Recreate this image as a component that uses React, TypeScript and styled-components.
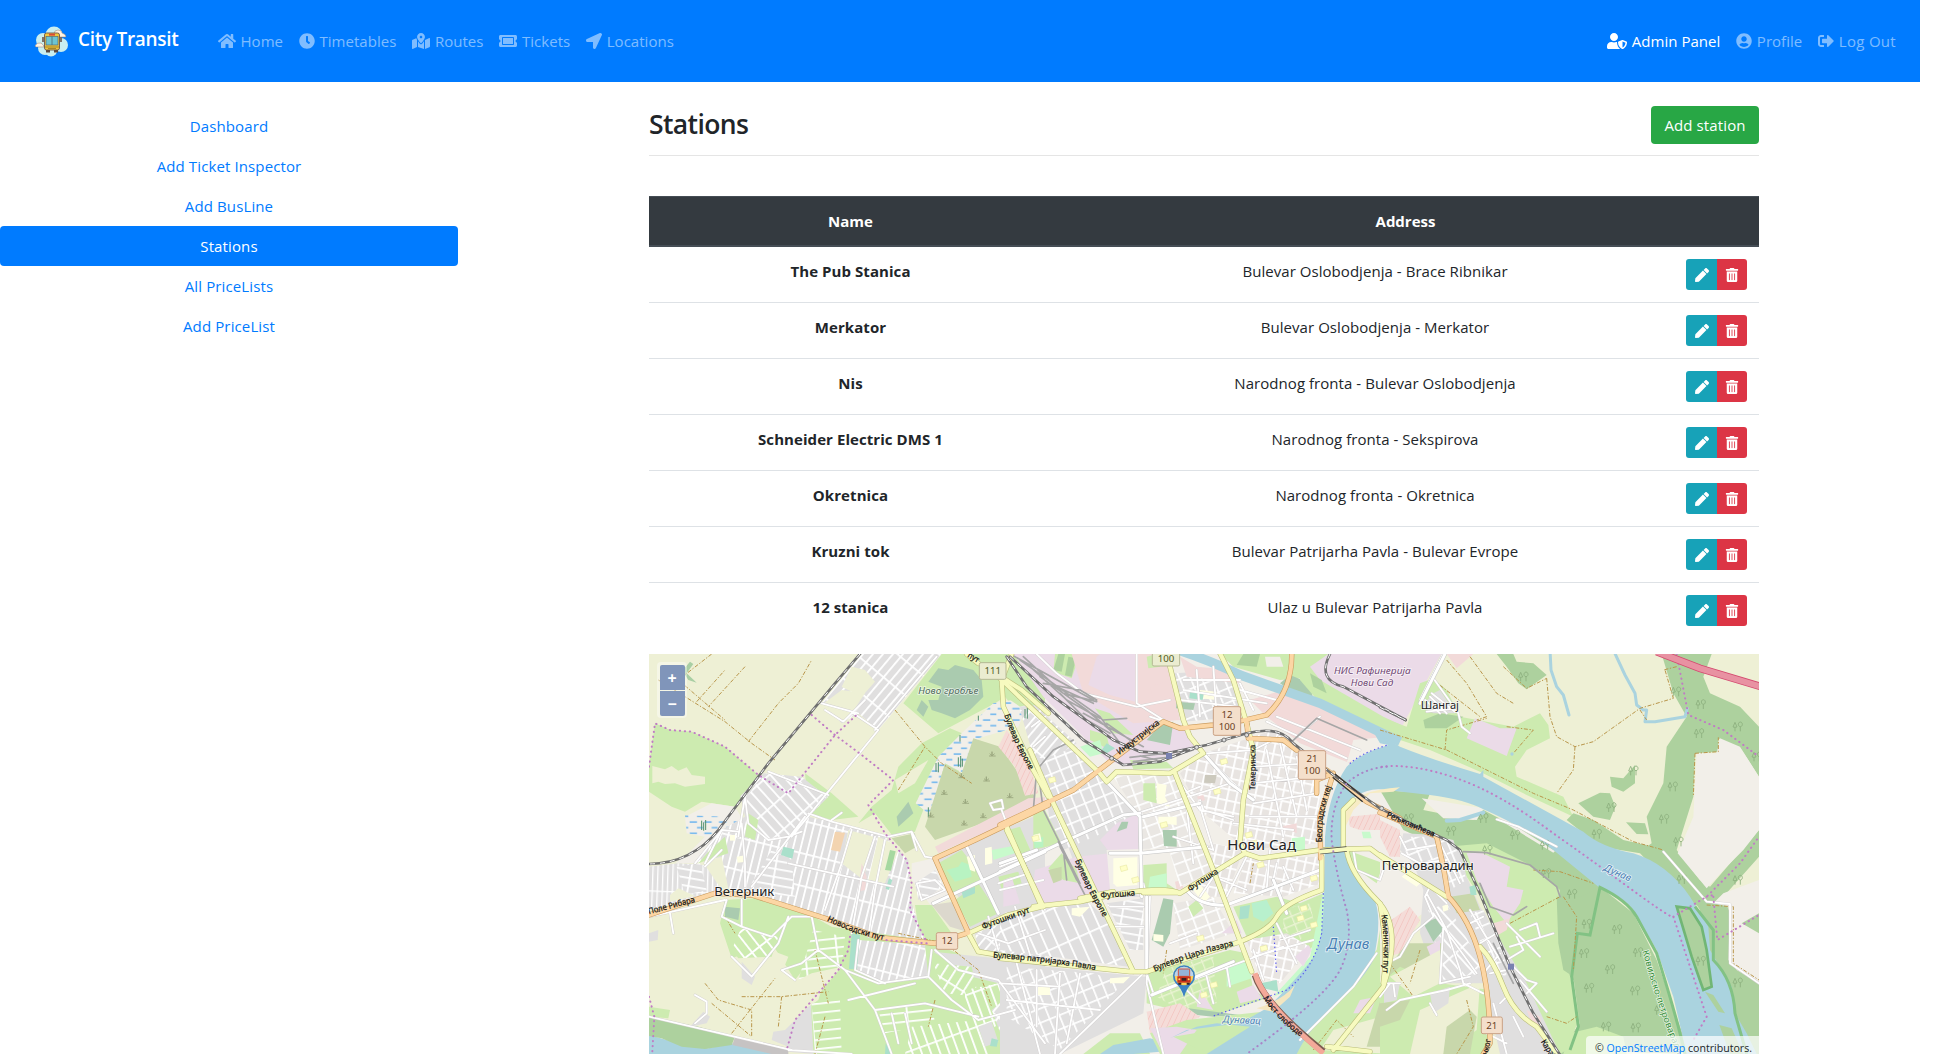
import React from "react";
import styled, { createGlobalStyle } from "styled-components";
import {
  FaHome, FaClock, FaMapMarkedAlt, FaTicketAlt, FaLocationArrow,
  FaUserShield, FaUserCircle, FaSignOutAlt, FaPen, FaTrashAlt,
} from "react-icons/fa";

const Global = createGlobalStyle`
  *, *::before, *::after { box-sizing: border-box; }
  html, body { margin: 0; background: #fff; height: 1054px; overflow: hidden; }
  body {
    font-family: "Open Sans", "Noto Sans", sans-serif;
    font-size: 15px; line-height: 24px; color: #212529;
  }
`;

const Page = styled.div`
  width: 1920px; height: 1054px; overflow: hidden;
  display: flex; flex-direction: column;
`;
const Navbar = styled.nav`
  height: 82px; background: #007bff; display: flex; align-items: center;
  padding: 0 16px 0 34px; flex: none;
`;
const Brand = styled.a`
  display: flex; align-items: center; gap: 8px; width: 176px;
  color: #fff; font-size: 19px; font-weight: 600; white-space: nowrap;
  letter-spacing: -0.3px;
  span { margin-top: -4px; }
`;
const NavGroup = styled.div<{ $end?: boolean }>`
  display: flex; margin-left: ${(p) => (p.$end ? "auto" : "0")};
`;
const NavLink = styled.a<{ $active?: boolean; $icon?: number; $track?: number }>`
  display: flex; align-items: center; gap: 4.5px; padding: 8px; white-space: nowrap;
  color: ${(p) => (p.$active ? "#fff" : "rgba(255,255,255,.5)")};
  letter-spacing: ${(p) => p.$track ?? 0.03}px;
  svg { flex: none; width: ${(p) => p.$icon ?? 16}px; height: 16px; }
`;
const Body = styled.div`
  display: flex; padding-top: 24px; flex: 1; min-height: 0;
`;
const Sidebar = styled.aside`
  width: 458px; display: flex; flex-direction: column; flex: none;
`;
const SideLink = styled.a<{ $active?: boolean }>`
  height: 40px; padding: 7.5px 16px; text-align: center; border-radius: 4px;
  letter-spacing: 0.12px;
  color: ${(p) => (p.$active ? "#fff" : "#007bff")};
  background: ${(p) => (p.$active ? "#007bff" : "transparent")};
`;
const Main = styled.main`
  width: 1110px; margin-left: 191px; display: flex; flex-direction: column; flex: none;
`;
const TitleBar = styled.header`
  height: 50px; display: flex; justify-content: space-between; align-items: flex-start;
  border-bottom: 1px solid #e5e5e5; margin-bottom: 40px; flex: none;
`;
const Title = styled.h3`
  margin: 0; font-size: 26.5px; font-weight: 600; line-height: 36px; letter-spacing: -0.6px;
`;
const AddButton = styled.button`
  width: 108px; height: 38px; border: 0; border-radius: 4px; background: #28a745;
  color: #fff; font: inherit; letter-spacing: 0.12px; white-space: nowrap; padding: 0;
`;
const Head = styled.div`
  display: grid; grid-template-columns: 403px 1fr; height: 51px; padding: 12px 0;
  background: #343a40; color: #fff; font-weight: 700; text-align: center;
  border-top: 1px solid #454d55; border-bottom: 2px solid #454d55; flex: none;
`;
const Row = styled.div`
  display: grid; grid-template-columns: 403px 646px 61px; height: 56px; padding-top: 12px;
  border-bottom: 1px solid #dee2e6; text-align: center; flex: none;
  &:last-child { border-bottom-color: transparent; }
`;
const Name = styled.div`font-weight: 700; letter-spacing: 0.07px;`;
const Address = styled.div`letter-spacing: 0.05px;`;
const Actions = styled.div`
  display: flex; justify-content: flex-end; padding-right: 12px;
`;
const IconButton = styled.button<{ $danger?: boolean }>`
  flex: none; height: 31px; width: ${(p) => (p.$danger ? 30 : 31)}px; border: 0; padding: 0;
  display: flex; align-items: center; justify-content: center; color: #fff;
  background: ${(p) => (p.$danger ? "#dc3545" : "#17a2b8")};
  border-radius: ${(p) => (p.$danger ? "0 3px 3px 0" : "3px 0 0 3px")};
  svg { width: 14px; height: 14px; }
`;
const Table = styled.section`height: 458px; flex: none;`;
const MapBox = styled.section`
  position: relative; height: 400px; overflow: hidden; flex: none;
  > svg { display: block; }
`;
const Zoom = styled.div`
  position: absolute; left: 8px; top: 8px; padding: 2.5px; border-radius: 4px;
  background: rgba(255,255,255,.4); display: flex; flex-direction: column; gap: 1px;
`;
const ZoomButton = styled.button<{ $last?: boolean }>`
  width: 25px; height: 25px; padding: 2px 0 0; border: 0; color: #fff;
  background: #8095ba; font: 700 16px/23px "Open Sans", sans-serif;
  border-radius: ${(p) => (p.$last ? "0 0 2px 2px" : "2px 2px 0 0")};
`;
const Attribution = styled.div`
  position: absolute; right: 0; bottom: 0; height: 18px; width: 173px; padding-right: 7px;
  background: rgba(255,255,255,.7); border-radius: 4px 0 0 0; text-align: right;
  font-size: 10.6px; line-height: 24px; white-space: nowrap; overflow: hidden;
  a { color: #007bff; }
`;

function Logo() {
  return (
    <svg width="36" height="31" viewBox="0 0 36 31">
      <g fill="#c9eef0">
        <circle cx="20" cy="9" r="8.5" /><circle cx="9" cy="14" r="7" />
        <circle cx="27" cy="19" r="7" /><circle cx="11" cy="22" r="7" />
        <circle cx="17" cy="24" r="6.5" />
      </g>
      <path d="M20 8q0-4 4-4 4 0 4 3 4 1 4 4h-9zM1 20q2-4 6-3 3 2 3 4H2z" fill="#fff3e3" stroke="#8d7c70" strokeWidth=".5" />
      <path d="M9 11v5M27 11v5" stroke="#6b5348" strokeWidth="1.6" />
      <rect x="10.5" y="7" width="15" height="17" rx="2" fill="#efc53d" stroke="#6b5348" strokeWidth=".9" />
      <rect x="15" y="7.6" width="6" height="2" fill="#d94a3b" />
      <rect x="12" y="10.5" width="12" height="8.5" fill="#6cc4d2" stroke="#5b6b70" strokeWidth=".7" />
      <path d="M18 10.5v8.5" stroke="#4c6a72" strokeWidth=".8" />
      <path d="M11 21h14M14 22.5h8" stroke="#8a6a1f" strokeWidth=".7" />
      <path d="M12 24h4v2.5h-4zM20 24h4v2.5h-4z" fill="#5a4a44" />
    </svg>
  );
}

/* ---------- map drawing: three sheets, three units to a pixel ---------- */

const C = {
  farm: "#eef0d5", grass: "#cdebb0", forest: "#add19e", water: "#aad3df", town: "#e0dfdf",
  ind: "#ebdbe8", land: "#f2efe9", pink: "#f2dad9", scrub: "#c8d7ab", school: "#ffffe5",
  park: "#c8facc", cem: "#aacbaf", pitch: "#aae0cb",
};
type Area = [string, string];
type Sheet = {
  x: number; areas: Area[]; streets: string; avenues: string; yellow: string; orange: string;
  rail: string; siding: string; tracks: string; border: string;
};

const west: Sheet = {
  x: -12,
  areas: [
    [C.farm, "0,0 1250,0 1250,1212 0,1212"],
    [C.grass, "30,220 75,240 140,245 240,290 340,375 350,395 290,440 270,470 170,455 120,485 80,470 12,425 12,350"],
    [C.farm, "22,348 60,358 80,348 100,362 125,352 140,375 180,380 180,402 120,410 90,400 60,402 40,395 22,400"],
    [C.land, "120,500 200,460 270,470 300,520 240,540 150,640 90,640 130,610 180,560 125,550"],
    ["url(#wet)", "120,495 240,500 290,520 240,535 190,560 125,550"],
    ["#a9cfa4", "112,62 135,35 145,42 125,70 155,98 130,90"],
    [C.water, "12,1155 100,1180 190,1195 260,1180 400,1212 12,1212"],
    [C.grass, "12,1070 75,1080 70,1105 12,1100"],
    [C.forest, "12,1100 160,1130 270,1160 260,1185 180,1197 110,1190 50,1165 12,1158"],
    ["#c6c3c3", "270,1160 430,1195 430,1212 380,1212 262,1185"],
    [C.town, "385,1145 420,1140 500,1060 505,1212 430,1205 430,1190 380,1170"],
    ["url(#sNE)", "650,12 890,12 700,240 640,190 590,220 530,160"],
    [C.farm, "590,120 660,130 600,220 530,165"],
    [C.farm, "620,50 660,60 690,95 650,140 590,110"],
    [C.grass, "890,12 1095,12 1200,50 1200,190 1110,180 1080,140 1050,160 880,250 775,160"],
    [C.pink, "1100,12 1230,12 1230,110"],
    [C.cem, "880,55 910,60 930,45 985,60 1010,90 1015,140 975,180 930,205 890,190 860,180 850,150 880,150 890,110 850,95"],
    [C.cem, "815,180 830,150 850,170 835,200"],
    [C.grass, "915,235 980,262 940,370 900,360 850,440 810,545 745,560 690,490 640,520 680,470 740,420 760,350 830,280"],
    [C.land, "1045,160 1160,140 1120,230 1000,265 965,375 900,340 855,495 812,460 880,320 950,250"],
    ["url(#wet)", "1045,160 1160,140 1120,230 1000,265 965,375 900,340 855,495 812,460 880,320 950,250"],
    [C.farm, "750,390 850,330 810,400 760,430"],
    [C.scrub, "985,265 1065,290 1170,440 1110,485 870,570 840,530 900,342 950,370"],
    [C.cem, "790,455 805,490 760,530 755,500"],
    [C.scrub, "740,565 810,550 815,590 780,610"],
    [C.pink, "870,590 1150,445 1215,440 1215,480 1140,505 990,560 880,610"],
    ["url(#mil)", "1085,240 1150,330 1180,430 1140,437 1110,350 1060,290"],
    [C.grass, "480,370 560,430 640,500 560,510 490,490"],
    ["url(#sV)", "360,370 450,380 550,440 490,500 560,515 720,560 790,630 800,760 840,870 700,870 540,810 470,780 320,735 250,715 230,620 150,640 230,540 300,500 290,450"],
    ["url(#sNW)", "355,370 470,380 545,440 440,560 370,570 310,520 300,450"],
    ["url(#sWide)", "320,700 380,600 440,630 450,740 400,735"],
    [C.farm, "610,540 685,560 655,690 590,640"], [C.farm, "700,560 765,590 720,700 670,690"],
    [C.grass, "195,600 240,560 250,610 160,640"], [C.grass, "310,490 340,510 330,570 300,560"],
    [C.pitch, "415,590 448,598 442,626 408,615"], ["#f3d4b0", "570,545 600,548 585,605 558,600"],
    ["#a6d8a0", "735,600 752,604 738,662 720,660"], [C.pitch, "732,685 742,690 732,720 722,716"],
    [C.pink, "650,640 665,680 660,720 640,725"], [C.school, "255,555 270,555 270,572 255,572"],
    [C.school, "275,620 300,616 298,636 278,638"],
    ["url(#sWW)", "12,650 100,640 180,645 230,720 160,740 12,780"],
    ["url(#sWide)", "95,650 165,640 185,720 120,735"],
    [C.farm, "75,735 100,715 150,738 75,755"],
    [C.grass, "240,750 330,745 470,780 560,830 840,870 1060,960 1200,1130 1250,1212 505,1212 498,1060 590,950 520,900 450,990 380,880 260,925 225,820"],
    [C.farm, "390,905 430,920 410,970 450,1000 550,950 520,1050 490,1070 330,960"],
    [C.town, "290,935 330,980 320,1005 290,985"], [C.town, "135,1130 175,1085 195,1100 185,1120"],
    [C.town, "12,850 40,840 38,870 12,875"],
    ["url(#gNW)", "320,840 400,860 380,920 280,925 260,900 290,830"],
    ["url(#sV)", "640,870 840,885 850,985 720,1000 635,960"],
    ["url(#gH)", "505,840 600,860 590,950 500,970 460,990"],
    [C.pitch, "620,850 645,855 636,958 612,957"],
    [C.town, "865,905 1200,940 1250,1000 1250,1212 1120,1212 1040,1100 1060,1000 980,980"],
    ["url(#gNE)", "865,940 980,950 1000,1040 900,1030"],
    ["url(#gV)", "960,1020 1060,1000 1090,1110 1010,1150 960,1100"],
    ["url(#sNE)", "1040,1080 1100,1030 1200,1080 1180,1212 1090,1212"],
    ["url(#gH)", "700,1080 860,1060 870,1120 720,1150"],
    ["url(#gH)", "500,1060 585,1050 590,1212 510,1212"],
    ["url(#gV)", "800,1130 1000,1110 1040,1212 780,1212"],
    [C.town, "1000,1130 1040,1115 1060,1175 1020,1190"],
    [C.cem, "240,770 285,775 280,810 240,800"],
    [C.pitch, "722,1180 740,1212 720,1212"], [C.pitch, "1040,1165 1060,1170 1055,1190 1035,1188"],
    [C.town, "870,625 1200,485 1250,480 1250,740 975,845 940,740"],
    [C.land, "800,640 865,625 920,745 860,770 800,690"],
    ["url(#sWide)", "810,700 870,660 895,710 850,740 820,750"],
    ["#dcd8cd", "860,765 925,755 965,845 915,830"],
    [C.grass, "810,765 860,765 920,850 850,880 820,830"],
    [C.grass, "880,640 950,600 1020,690 920,740"], [C.grass, "930,750 1000,700 1060,790 975,830"],
    ["#b8f3c2", "905,660 940,650 950,635 975,645 980,680 930,695"],
    [C.park, "1040,600 1120,585 1125,605 1045,630"], [C.school, "1020,595 1040,590 1042,640 1020,645"],
    [C.school, "965,620 990,615 990,665 975,660"], [C.pitch, "950,725 990,710 990,730 955,745"],
    [C.school, "1165,560 1195,545 1195,570 1165,575"], [C.grass, "1060,680 1120,665 1130,700 1070,720"],
    ["url(#sNE)", "990,850 1180,780 1210,930 1000,900"],
  ],
  streets:
    "M530,160 640,190 M540,180 595,215 660,150 M690,240 875,20 M440,560 700,240 M700,240 625,190 M320,710 480,500 M490,490 560,515 730,560 800,545 840,620 M430,640 540,665 745,710 M370,365 550,435 M560,510 590,488 M620,540 590,640 540,780 M690,560 650,680 620,850 M720,570 690,720 670,860 M300,440 310,520 370,570 430,560 470,545 M230,540 180,640 M150,640 230,540 280,545 M290,440 350,380 M245,750 230,800 290,830 290,750 M290,830 380,860 440,800 500,800 520,900 600,960 M12,800 240,750 M75,790 85,850 M600,960 690,1080 740,1212 M600,960 700,1000 850,980 920,1050 1000,1110 1110,1080 M690,1080 840,1060 1000,1100 M850,980 860,900 M520,900 470,940 410,960 450,990 M260,920 320,980 400,880 430,800 M150,1120 185,1090 185,1055 150,1035 M12,1100 440,1200 M430,1200 620,1212 M870,900 940,960 1060,990 1200,1180 M640,870 630,960 720,1000 M815,700 830,750 900,720 870,690 815,700 M840,620 870,625 M800,550 815,600 M1000,850 1090,880 1200,840 M1030,800 1060,900 M1110,770 1160,930 M1035,460 1070,450 1075,475 1045,480 1035,460 M1070,480 1085,520 M1140,640 1200,780 M1060,700 1150,670 M1160,230 1200,200 M1165,290 1200,260 M610,1050 810,1000 M740,1090 760,1180 M780,1090 800,1180 M230,600 180,650 M280,560 300,440 M290,520 300,640 300,710",
  avenues: "M865,760 1200,605 M965,590 1060,790",
  yellow: "M965,12 1000,40 M1100,12 1070,90 1075,170 1165,360 1210,440 M1075,85 1130,120 1210,190 M1085,530 1190,770 M970,850 1090,795 1190,770 M970,850 1000,905 1060,915 1210,940",
  orange: "M12,795 210,730 320,735 540,805 700,862 870,880 970,848 870,625 990,570 1210,465",
  rail: "M645,12 570,100 370,340 220,540 Q140,640 12,642",
  siding: "",
  tracks: "M200,12 100,90 M300,50 190,170 M40,90 240,215 320,280 390,330 M100,90 240,210 M310,275 400,160 460,100 500,30 M155,155 240,60 M750,180 840,290 890,340 980,400 M760,420 840,290 M290,1040 410,1040 550,1025 M180,1000 220,1050 320,1080 320,1160 M410,1040 400,1130 M260,1150 390,985 M200,1060 320,1160 M510,900 550,1060 M510,1212 540,1100 M760,850 900,880 1000,960 1040,1070 M870,1050 850,1130 M240,800 270,850",
  border: "M12,350 30,220 75,240 140,245 240,290 340,375 430,430 570,255 640,190 M500,195 570,255 650,315 745,390 670,465 720,550 785,630 800,700 795,780 845,875 M845,880 720,870 M615,860 610,900 580,960 450,1110 425,1200 M12,1040 28,1100 22,1205",
};

const centre: Sheet = {
  x: 1053,
  areas: [
    [C.land, "135,0 1200,0 1200,1212 135,1212"],
    [C.grass, "0,90 100,160 60,170 0,130"], [C.town, "60,170 110,165 320,400 430,500 425,740 260,740 160,470 110,350"],
    ["url(#sNE)", "60,180 120,180 230,280 150,330 100,320"],
    ["url(#sBlk)", "120,330 230,290 330,400 400,490 160,580 140,450"],
    ["url(#sBlk)", "140,450 200,480 390,490 400,510 190,600"],
    [C.ind, "40,12 240,12 250,130 410,190 560,240 600,290 380,350 320,330 130,140"],
    [C.grass, "285,175 330,190 400,255 340,250"], [C.grass, "270,240 320,255 330,300 270,270"],
    [C.grass, "390,330 500,335 520,355 400,358"],
    [C.grass, "165,12 240,12 215,85 160,65"],
    [C.forest, "175,12 195,12 185,65 160,60"], [C.forest, "205,20 228,25 215,80 195,76"],
    [C.pink, "215,12 500,12 540,210 400,220 250,130"], [C.ind, "290,20 300,12 405,12 405,155 330,135 265,105"],
    [C.pink, "450,110 510,90 520,140 460,150"], [C.grass, "440,20 470,12 480,50 445,55"],
    [C.cem, "475,230 520,215 510,285 440,270"],
    ["url(#sBlk)", "520,70 700,60 720,200 550,215"], [C.school, "600,120 650,125 650,150 600,145"],
    [C.pitch, "570,125 612,128 608,150 568,145"], [C.cem, "530,155 585,160 580,180 528,175"],
    [C.grass, "660,12 900,12 960,80 840,90 700,50"], [C.forest, "730,12 780,12 770,50 710,45"],
    [C.cem, "840,100 870,75 930,100 940,150 890,135"], [C.land, "795,20 840,20 850,50 800,50"],
    [C.pink, "540,20 590,50 700,60 720,100 560,80"],
    [C.pink, "750,150 850,120 1100,210 1150,270 1050,340 900,280 800,200"],
    [C.land, "1060,270 1160,260 1150,290 1040,340"],
    [C.grass, "890,12 1000,12 1260,260 1140,240 960,160 900,90"],
    [C.ind, "985,12 1330,12 1215,230 1150,200 960,90 930,50"],
    [C.forest, "930,70 965,90 980,130 940,110"],
    [C.park, "240,290 300,270 310,310 270,320"], [C.pitch, "320,280 345,295 320,310 305,300"],
    ["url(#sOld)", "610,310 820,240 900,300 960,430 950,580 740,600 600,480 540,370"],
    ["url(#sBlk2)", "340,380 520,370 620,590 640,650 430,680 420,500"],
    ["url(#sOld)", "560,620 640,580 730,600 680,740 600,740"],
    ["url(#sOld)", "740,625 960,620 965,700 850,740 700,730"],
    [C.school, "470,400 500,405 495,440 510,470 470,460"], [C.grass, "430,400 465,400 470,460 430,450"],
    [C.cem, "488,540 530,540 530,590 492,588"], [C.school, "475,500 530,500 530,525 475,520"],
    ["#ccc9bd", "615,375 650,375 645,400 612,398"], [C.pink, "610,435 590,440 600,455 615,450"],
    [C.park, "875,565 915,560 915,600 875,605"], [C.pink, "840,530 890,520 890,550 870,540"],
    [C.ind, "350,520 415,490 415,610 330,610 300,570"], [C.cem, "365,515 385,515 380,535 350,545"],
    [C.grass, "100,470 135,480 185,580 100,600"], ["#b8f3c2", "100,570 130,560 130,590 105,595"],
    [C.school, "100,555 120,550 125,575 100,575"],
    [C.ind, "105,660 230,620 330,610 330,740 130,765 100,700"],
    [C.grass, "145,655 185,610 230,660 240,700 190,690"], [C.scrub, "145,660 185,650 185,690 160,700"],
    [C.land, "320,600 640,590 600,720 430,740 330,720"],
    [C.school, "340,625 412,622 412,705 350,710 340,700"], [C.grass, "430,645 500,640 500,700 530,720 430,725"],
    [C.park, "450,680 500,670 500,720 445,715"], [C.pink, "525,695 545,690 550,715 530,720"],
    ["url(#sBlk2)", "510,610 600,590 640,660 540,710"],
    [C.ind, "10,690 35,680 60,760 10,770"],
    [C.grass, "25,540 60,530 95,610 60,620"],
    ["url(#sV2)", "0,790 130,775 260,755 330,810 385,950 0,900"],
    ["url(#sWide)", "320,760 430,745 430,900 390,900"],
    [C.school, "215,775 270,770 240,800 215,795"],
    [C.land, "440,745 670,760 720,860 460,920 440,900"], ["url(#sBlk2)", "520,760 640,740 700,850 540,900"],
    [C.cem, "490,745 520,750 510,850 490,890 455,870"], [C.school, "460,852 490,855 490,875 460,872"],
    [C.grass, "565,770 590,750 610,775 580,800"], [C.school, "590,690 630,740 610,760 580,720"],
    [C.ind, "665,850 710,810 725,850"],
    [C.grass, "700,770 830,740 900,760 970,730 970,840 930,900 860,880 740,860"],
    ["#b8f0cd", "755,760 800,750 820,790 790,815 760,800"], [C.pitch, "720,770 750,765 745,805 718,808"],
    ["url(#sPark)", "850,800 880,770 930,760 945,830 900,870 850,840"],
    ["url(#sOld)", "740,870 860,850 930,890 840,1000 780,980"],
    [C.park, "970,720 975,820 940,940 870,1020 820,1040 930,920"],
    [C.ind, "885,920 925,885 935,900 910,950"], [C.pitch, "780,1000 830,990 835,1025 790,1015"],
    [C.grass, "440,970 690,900 740,910 760,1020 800,1045 650,1095 570,1090 440,1060"],
    [C.park, "680,950 740,935 755,985 680,1010"], [C.ind, "710,1025 760,1005 785,1045 720,1060"],
    ["url(#sPark)", "500,950 640,920 650,1060 540,1080 470,1040"],
    [C.ind, "600,1020 640,1080 590,1070"], [C.cem, "565,1075 720,1095 640,1100 590,1095"],
    ["url(#mil)", "440,1085 540,1060 600,1100 560,1120 450,1150"],
    [C.town, "0,935 280,965 440,980 430,1090 180,1212 0,1212"],
    ["url(#sBlk)", "20,950 280,970 370,1000 180,1200 20,1100"],
    [C.school, "110,1005 150,1005 150,1035 110,1035"], [C.school, "330,985 390,980 370,1000 330,1000"],
    [C.grass, "250,1212 330,1150 420,1150 450,1212"], [C.water, "300,1212 340,1185 450,1165 520,1185 480,1205 400,1212"],
    [C.grass, "450,1150 560,1110 840,1080 700,1212 480,1212"], [C.ind, "450,1135 530,1130 590,1140 540,1212 490,1212"],
    [C.grass, "520,1160 700,1130 710,1160 600,1200"],
    [C.grass, "880,1180 1000,1040 1130,900 1150,780 1200,780 1200,1212 880,1212"],
    [C.farm, "960,1200 1000,1140 1180,1090 1180,1212"], [C.ind, "1080,1050 1130,1040 1110,1090 1060,1090"],
    [C.scrub, "1150,1020 1200,990 1200,1190 1100,1190"],
    ["url(#mil)", "1045,500 1200,485 1200,560 1160,540 1110,550 1050,530"],
    [C.land, "1045,540 1200,540 1200,800 1150,780 1130,700 1050,620"],
    [C.park, "1085,545 1110,545 1115,565 1090,565"], [C.grass, "1040,600 1150,640 1130,700 1060,650"],
    ["url(#mil)", "1180,800 1220,800 1220,880 1170,900"],
  ],
  streets:
    "M110,12 170,70 250,130 M430,970 180,1212 M410,0 410,160 490,210 M250,130 410,170 510,150 M0,720 130,690 M700,400 760,450 M520,370 600,480 700,500 M600,300 700,400 750,440 M410,490 690,400 M550,430 600,410 M600,450 610,480 700,510 M700,520 880,540 M760,460 950,430 M620,310 760,300 840,260 M800,300 850,560 M840,280 890,500 M890,320 920,480 M760,350 930,340 M755,400 950,380 M750,500 950,500 M810,600 800,720 M830,640 820,690 840,740 M680,740 740,620 M600,740 640,680 740,720 M450,200 540,230 M540,150 710,170 M590,60 600,200 M640,50 650,200 M550,90 720,90 M550,120 800,160 M720,120 830,150 M800,215 1040,325 M830,200 1080,300 M900,250 960,200 M760,180 720,100 M460,1030 440,970 M455,1035 850,890 M440,1000 470,1130 490,1212 M0,1000 180,1010 M50,940 120,1212 M180,970 165,1212 M240,970 200,1180 M110,960 110,1130 M20,1050 300,1080 M450,740 440,1000 M430,700 440,740 M520,560 640,600 M640,1060 620,980 M540,1000 600,1060 M690,1010 680,950 M880,720 850,650 M790,990 760,900 M930,840 840,870 M830,820 890,940 M760,920 940,870 M900,1170 1060,1010 1130,910 M1070,660 1140,690 1150,660 M1060,600 1070,660 M510,880 590,850 M330,770 430,770 M330,830 430,830 M0,650 100,610 M560,470 580,640 M600,470 640,600",
  avenues: "M0,665 180,580 370,495 420,490 M320,395 420,500 425,740 M0,640 110,600 M420,610 620,590 M440,970 440,740 M560,720 Q600,770 680,765 L960,660 M820,690 860,790 M455,1035 700,935 M330,610 420,610 M430,500 600,460 M610,310 690,400 760,450",
  yellow: "M510,50 550,210 570,260 610,310 510,370 350,365 320,395 300,370 0,85 M655,0 700,90 740,220 760,300 730,450 720,580 735,610 780,625 960,600 1110,595 1170,640 M525,370 640,660 755,965 M90,300 160,460 400,965 M240,745 340,725 M430,728 540,728 M100,770 240,755 Q480,700 540,730 L735,610 M0,925 390,965 440,965 720,875 Q810,840 830,800 T965,720 L965,620 M20,540 130,770 M1040,600 Q1050,670 1130,750 T1150,1010 L1000,1200 M1030,595 1030,480 1060,450 M980,1190 1110,1205",
  orange: "M0,525 220,420 350,320 490,215 540,235 640,225 735,210 800,195 Q880,120 875,0 M740,215 745,265 850,270 890,300 M980,360 1100,455 1200,505 M950,430 950,390 1000,370 960,500 962,625",
  rail: "M30,20 160,140 340,270 420,305 500,310 620,285 740,250 Q840,225 880,280 L1000,375 1140,475 M20,20 80,110 250,270 370,345 480,335 590,292 M990,12 Q950,90 1030,110 L1217,210",
  siding: "M30,12 280,150 M60,30 300,200 360,280 M120,80 260,180 330,240 M170,110 280,160 M250,190 430,290 M70,20 190,130 290,155 M90,50 200,150 300,205 M130,100 240,120 290,150 M180,130 260,210 330,250 M390,322 480,312 560,300 M400,335 500,322 580,300 M420,318 470,330 M100,480 110,360 160,300 220,270 M115,370 130,480 240,700 M180,590 260,745 M175,575 230,690 M870,280 950,205 1100,270 M190,600 200,690 M310,210 380,205 M320,220 390,270",
  tracks: "M940,1200 1010,1110 1060,1160 M500,900 490,970 M750,700 760,640",
  border: "",
};

const east: Sheet = {
  x: 2193,
  areas: [
    [C.farm, "190,0 1200,0 1200,1212 0,1212 0,440 60,240"],
    [C.land, "0,430 200,540 260,700 0,880"],
    [C.grass, "0,200 80,230 120,100 160,85 200,120 240,200 400,230 480,190 505,225 510,265 440,300 405,350 410,380 550,440 580,500 430,430 300,365 150,300 0,250"],
    [C.forest, "130,210 180,190 250,200 200,235 135,235"],
    [C.ind, "285,205 360,235 410,235 380,318 260,265"],
    [C.pink, "200,12 280,12 230,55"], [C.forest, "350,12 400,12 410,35 460,40 500,75 440,118 415,100 380,50"],
    [C.town, "160,130 180,120 225,190 160,190 125,170"],
    [C.forest, "845,12 995,12 970,80 990,130 1080,170 1137,230 1137,380 1085,300 1015,265 1015,305 945,310 940,440 890,600 960,690 990,710 1080,605 1137,540 1137,620 1030,740 1137,1000 1137,1212 980,1212 960,780 850,610 800,590 815,580 800,500 850,400 860,290 920,200 880,130"],
    [C.land, "950,310 1010,310 1020,265 1080,290 1137,380 1137,540 1090,600 1040,650 980,715 893,610 940,500"],
    [C.land, "1000,760 1030,730 1137,690 1137,1000 1070,960 1045,930 1050,770"],
    [C.forest, "1085,820 1137,790 1137,850"],
    [C.forest, "690,380 730,385 765,345 765,400 730,425 695,410"],
    [C.forest, "595,460 660,428 690,430 706,470 690,510 640,500"],
    [C.forest, "738,517 795,520 805,553 770,552"],
    [C.forest, "580,490 640,510 730,570 820,590 850,610 970,760 935,770 780,610 660,590 560,510"],
    [C.forest, "0,420 150,430 130,480 280,510 310,480 540,600 660,710 770,1040 700,1212 530,1212 600,1120 590,1000 550,960 540,750 400,640 200,600 70,540"],
    [C.grass, "200,590 320,580 440,640 540,720 540,860 600,1100 560,1200 540,1212 440,1060 400,960 300,740"],
    [C.forest, "530,740 600,740 660,710 760,790 830,930 900,1130 930,1212 560,1200 600,1130 580,980 550,960 535,880"],
    [C.grass, "570,1150 650,1130 730,1160 740,1212 550,1212"],
    [C.land, "125,445 310,475 290,510 190,505"],
    [C.land, "350,505 370,505 525,603 520,608"],
    [C.ind, "260,610 300,605 390,650 380,710 430,720 420,760 380,820 340,770 290,690"],
    [C.town, "70,550 170,555 240,600 260,680 300,770 440,1000 540,1212 360,1212 330,1080 320,1000 170,1000 120,850 130,720 100,640 60,600"],
    ["url(#sBlk)", "70,560 160,560 180,630 120,640 65,610"],
    ["url(#sNW)", "145,780 200,760 280,900 310,970 190,990 170,900"],
    ["url(#sBlk)", "270,790 310,780 370,900 380,980 330,960"],
    ["url(#sBlk)", "170,560 220,570 260,690 210,720"],
    ["url(#mil)", "0,510 60,540 60,620 30,620 0,560"],
    ["url(#mil)", "20,820 90,770 120,810 60,910 20,920"],
    [C.cem, "130,820 180,800 190,840 160,875"], [C.scrub, "210,740 280,730 300,780 230,790"],
    [C.scrub, "80,880 190,880 180,920 40,1000 20,960"], [C.ind, "140,890 180,870 180,915 150,915"],
    [C.grass, "0,1000 60,950 180,1000 330,1020 320,1212 0,1212"],
    [C.farm, "30,980 180,900 180,1000 100,1040"], [C.farm, "120,1080 300,1000 290,1140 190,1212 90,1212"],
    [C.town, "12,1000 60,1000 50,1050 12,1060"], [C.town, "150,1030 210,1010 205,1060 160,1090"],
    [C.scrub, "0,1060 90,1050 60,1110 0,1130"], [C.scrub, "200,1130 270,1080 290,1100 270,1212 190,1212"],
    [C.pink, "340,820 390,805 380,840 345,860"], [C.pink, "440,1080 480,1100 490,1150 455,1120"],
    [C.school, "65,680 90,660 130,690 110,710"], [C.pitch, "268,710 285,705 290,735 272,735"],
    [C.school, "187,768 203,763 205,780 190,785"],
  ],
  streets:
    "M195,0 120,150 M160,85 235,190 245,230 270,250 M135,150 180,190 M150,140 200,190 M155,130 225,185 M140,185 230,175 M65,610 120,640 200,630 M60,560 80,600 170,585 M170,560 240,700 M150,710 135,740 160,800 100,850 60,920 20,940 M150,710 200,760 M140,730 200,840 240,960 250,1000 M160,790 290,970 M190,830 180,1000 270,980 M20,1080 60,1050 200,1020 270,1000 M270,780 360,930 M270,820 310,800 M300,880 350,850 M380,820 480,920 M390,890 520,850 M420,840 470,820 480,860 M410,860 430,900 380,930 M420,990 500,1085 M400,950 440,990 470,1000 M340,1060 380,1212 M360,1060 380,1040 M250,1000 310,1030 M150,1060 170,1095 M12,1000 60,1000 M40,1000 45,1040 M330,970 380,960 M440,1030 470,1000 M530,590 415,530 350,508 M0,1040 30,1000 M310,970 360,910 M400,1100 430,1160 M320,1150 380,1180 M850,605 980,755 1050,762 1050,940 1137,1000",
  avenues: "M195,12 120,160",
  yellow: "M0,615 200,740 M300,890 Q340,930 370,1010 T470,1130 L545,1230 M0,760 Q25,900 10,1000",
  orange: "M0,488 170,560 190,650 205,740 Q270,810 300,920 T330,1180 L310,1212",
  rail: "M0,475 100,525 200,570 240,600 300,730 390,950 460,1090 550,1230 M0,172 77,210",
  siding: "M250,605 320,608 450,645 530,710 540,740 M300,700 330,770 400,795 440,770 M400,1000 340,880",
  tracks: "M0,240 200,300 300,350 460,430 580,480 760,575 850,600 M200,30 260,100 320,200 290,210 M270,20 350,130 400,160 M160,90 300,200 M500,85 510,200 530,260 585,290 640,275 780,175 880,145 855,60 M585,290 580,360 530,430 M890,50 850,60 M780,180 800,210 M370,50 440,115 500,85 M945,310 1015,305 1015,262 M945,310 940,440 M550,740 590,800 580,960 M390,820 540,740 M380,230 460,240 400,310 M195,300 200,240 320,205 M460,660 540,665 640,700 M500,1100 560,1120 590,1100 M980,765 1060,770 1060,940 1137,990 M120,900 90,1000 M260,1050 280,1130 230,1212 M30,940 100,1040",
  border: "M5,350 Q100,340 230,385 T520,550 Q620,620 750,715 T880,800 Q920,920 980,1100 L940,1170 M890,12 925,195 1030,240 1137,320 M880,800 980,740 1080,640 1137,560 M1000,740 1012,870 1137,795 M980,740 1000,735",
};
const sheets = [west, centre, east];

const trees: number[][] = [
  [430, 80], [888, 125], [962, 163], [957, 250], [1073, 230], [878, 410], [852, 507], [650, 552], [895, 575],
  [310, 505], [213, 543], [405, 555], [495, 585], [322, 600], [498, 670], [576, 732], [620, 822], [711, 838],
  [612, 910], [690, 958], [627, 1014], [765, 1022], [678, 1130], [767, 1133], [962, 933], [1073, 998], [1073, 690],
  [905, 688], [838, 1080], [86, 505], [774, 907], [760, 362], [694, 472], [1130, 320],
];

const Lines = ({ pick, color, width, dash, cap = "round" }: {
  pick: keyof Sheet; color: string; width: number; dash?: string; cap?: "round" | "butt";
}) => (
  <g fill="none" stroke={color} strokeWidth={width} strokeDasharray={dash} strokeLinejoin="round" strokeLinecap={cap}>
    {sheets.map((s, i) => <path key={i} d={s[pick] as string} transform={`translate(${s.x} -12)`} />)}
  </g>
);

const Streets = ({ id, turn, w, h, base = C.town, line = "#fff", t = 5.5 }: {
  id: string; turn: number; w: number; h: number; base?: string; line?: string; t?: number;
}) => (
  <pattern id={id} width={w} height={h} patternUnits="userSpaceOnUse" patternTransform={`rotate(${turn})`}>
    <rect width={w + 1} height={h + 1} fill={base} />
    <path d={`M0,${t / 2}H${w}M${t / 2},0V${h}`} stroke={line} strokeWidth={t} />
  </pattern>
);

type Label = { s: number; t: string; d: string; size: number; fill?: string; it?: boolean; len: number };
const roadLabels: Label[] = [
  { s: 0, t: "Поле Рибара", d: "M12,793 165,752", size: 25, len: 144 },
  { s: 0, t: "Новосадски пут", d: "M545,812 Q620,850 730,874", size: 25, len: 180 },
  { s: 0, t: "Футошки пут", d: "M1014,838 1165,783", size: 25, len: 150 },
  { s: 0, t: "пут", d: "M966,20 1010,46", size: 24, len: 36 },
  { s: 0, t: "Булевар Европе", d: "M1078,195 Q1100,270 1165,380", size: 25, len: 182 },
  { s: 1, t: "Булевар патријарха Павла", d: "M-21,923 Q130,932 310,964", size: 25, len: 310 },
  { s: 1, t: "Булевар Европе", d: "M225,632 Q255,710 316,812", size: 25, len: 190 },
  { s: 1, t: "Футошка", d: "M302,744 415,736", size: 25, len: 104 },
  { s: 1, t: "Футошка", d: "M570,725 665,662", size: 25, len: 103 },
  { s: 1, t: "Индустријска", d: "M358,315 490,214", size: 25, len: 154 },
  { s: 1, t: "Темеринска", d: "M765,420 Q768,350 765,278", size: 24, len: 136 },
  { s: 1, t: "Београдски кеј", d: "M966,577 Q962,490 998,400", size: 25, len: 170 },
  { s: 1, t: "Булевар Цара Лазара", d: "M464,965 Q580,915 715,884", size: 25, len: 250 },
  { s: 1, t: "Мост слободе", d: "M790,1045 Q830,1110 915,1170", size: 24, len: 160 },
  { s: 1, t: "Каменички пут", d: "M1144,795 Q1155,880 1148,975", size: 25, len: 174 },
  { s: 2, t: "Рељковићева", d: "M18,500 175,567", size: 24, len: 155 },
  { s: 2, t: "Ковиљско-петроварадински рит", d: "M787,903 Q830,1060 878,1180 L970,1400", size: 27, fill: "#2f8a35", len: 450 },
  { s: 2, t: "Карађорђева", d: "M482,1175 565,1308", size: 24, len: 145 },
  { s: 2, t: "Рачког", d: "M312,1240 Q330,1200 334,1150", size: 24, len: 75 },
];
const places: (Label & { x: number; y: number; turn?: number })[] = [
  { s: 0, t: "Ветерник", d: "", x: 208, y: 737, size: 38, len: 180 },
  { s: 1, t: "Нови Сад", d: "", x: 682, y: 600, size: 45, len: 206 },
  { s: 2, t: "Петроварадин", d: "", x: 5, y: 660, size: 38, len: 276 },
  { s: 2, t: "Шангај", d: "", x: 122, y: 177, size: 33, len: 115 },
  { s: 0, t: "Ново гробље", d: "", x: 820, y: 132, size: 28, fill: "#4f6b5c", it: true, len: 180 },
  { s: 1, t: "НИС Рафинерија", d: "", x: 1002, y: 72, size: 28, fill: "#734a76", it: true, len: 230 },
  { s: 1, t: "Нови Сад", d: "", x: 1052, y: 107, size: 28, fill: "#734a76", it: true, len: 128 },
  { s: 1, t: "Дунав", d: "", x: 982, y: 896, size: 41, fill: "#4a80b5", it: true, len: 126 },
  { s: 1, t: "Дунавац", d: "", x: 668, y: 1117, size: 29, fill: "#4a80b5", it: true, len: 114, turn: 3 },
  { s: 2, t: "Дунав", d: "", x: 670, y: 660, size: 30, fill: "#4a80b5", it: true, len: 86, turn: 24 },
];
const shields = [
  { s: 0, x: 1003, y: 38, w: 80, h: 50, t: ["111"], c: "#ebecd0" },
  { s: 0, x: 874, y: 848, w: 64, h: 50, t: ["12"], c: "#f4dfcb" },
  { s: 1, x: 457, y: -36, w: 82, h: 84, t: ["", "100"], c: "#ebecd0" },
  { s: 1, x: 640, y: 170, w: 82, h: 86, t: ["12", "100"], c: "#f4dfcb" },
  { s: 1, x: 895, y: 302, w: 82, h: 86, t: ["21", "100"], c: "#f4dfcb" },
  { s: 2, x: 304, y: 1101, w: 63, h: 50, t: ["21"], c: "#f4dfcb" },
];

function CityMap() {
  const east12 = "translate(2193 -12)";
  const mid12 = "translate(1053 -12)";
  return (
    <svg width="1110" height="400" viewBox="0 0 3330 1200">
      <defs>
        <Streets id="sV" turn={14} w={22} h={95} />
        <Streets id="sV2" turn={-24} w={34} h={110} />
        <Streets id="sNE" turn={40} w={23} h={80} />
        <Streets id="sNW" turn={-42} w={26} h={75} />
        <Streets id="sWW" turn={2} w={15} h={120} t={4} />
        <Streets id="sWide" turn={10} w={62} h={24} />
        <Streets id="sBlk" turn={-22} w={31} h={40} t={5} />
        <Streets id="sBlk2" turn={-20} w={38} h={34} t={5} base="#eae7e3" />
        <Streets id="sOld" turn={12} w={27} h={33} base="#e8e4e1" />
        <Streets id="gV" turn={-20} w={26} h={100} base={C.grass} />
        <Streets id="gH" turn={-6} w={95} h={27} base={C.grass} />
        <Streets id="gNE" turn={32} w={27} h={90} base={C.grass} />
        <Streets id="gNW" turn={-38} w={28} h={70} base={C.grass} />
        <Streets id="sPark" turn={-22} w={30} h={26} base={C.grass} line="#eaf3d2" t={4} />
        <pattern id="wet" width="44" height="34" patternUnits="userSpaceOnUse">
          <path d="M2,6h22M24,23h18" stroke="#4aa5f0" strokeWidth="3" />
        </pattern>
        <pattern id="mil" width="15" height="15" patternUnits="userSpaceOnUse" patternTransform="rotate(25)">
          <rect width="16" height="16" fill="#f5dcd8" /><path d="M0,0V15" stroke="#f3b9b5" strokeWidth="3" />
        </pattern>
      </defs>
      <rect width="3330" height="1200" fill={C.land} />
      {sheets.map((s, i) => (
        <g key={i} transform={`translate(${s.x} -12)`}>
          {s.areas.map(([f, p], j) => <polygon key={j} points={p} fill={f} />)}
        </g>
      ))}
      <g transform={mid12}>
        <path d="M535,0 Q640,35 720,75 L960,160 1200,275" fill="none" stroke={C.water} strokeWidth="28" />
        <path fill={C.water} d="M1165,285 Q1080,310 1040,350 Q985,430 975,560 L972,740 Q970,880 935,930 Q860,1020 800,1075 L720,1120 560,1140 510,1165 590,1130 650,1120 750,1130 620,1212 H890 Q930,1130 1010,1060 T1120,930 Q1150,800 1120,740 Q1035,660 1040,600 L1028,550 Q1010,490 1065,440 Q1110,410 1160,420 L1290,435 Q1400,450 1450,478 Q1570,530 1660,600 L1795,710 Q1870,740 1900,780 L1970,900 2020,1040 2060,1212 H2270 L2240,1150 2205,1090 2195,1010 2130,900 2125,830 2070,740 Q2000,640 1900,610 Q1800,590 1750,545 L1450,380 1450,360 1440,372 Q1300,330 1200,290 L1120,245 1140,280Z" />
        <path d="M770,1075 Q850,1050 885,1005 L870,1040 820,1085" fill="#f3e6c0" />
        <path d="M1030,480 Q1070,420 1200,412 L1180,425 1110,430 1060,480 1032,540" fill="#f7ecc4" />
      </g>
      <g transform={east12} fill="none" stroke={C.water} strokeLinejoin="round" strokeLinecap="round">
        <path d="M510,0 513,60 530,110 550,135 567,195" strokeWidth="9" />
        <path d="M700,0 735,75 765,130 770,165 790,180 800,180 795,215 825,215 915,200 922,175" strokeWidth="9" />
        <path d="M200,512 240,510 310,488" strokeWidth="12" />
      </g>
      <g transform={east12}>
        <path d="M890,770 930,775 965,830 980,900 995,1010 970,1020 935,920Z" fill={C.forest} stroke="#71b675" strokeWidth="8" />
        <path d="M975,1025 1000,1035 1035,1090 1015,1085Z M1018,1125 1055,1135 1075,1180 1090,1212 1050,1212Z" fill={C.forest} />
        <path d="M570,1200 595,1130 575,980 592,850 630,855 660,712 Q740,750 770,800 L830,910 Q890,1100 915,1212 M945,770 1000,840 1000,930 Q1060,990 1065,1090 L1100,1212" fill="none" stroke="#82c284" strokeWidth="9" />
        <g fill="none" stroke="#8bae7d" strokeWidth="2.5">
          {trees.map(([x, y], i) => (
            <path key={i} d={`M${x - 8},${y + 14}v-12m0,0l-6,-1 6,-14 6,14zM${x + 8},${y + 14}v-14a6,7 0 1 1 .1,0`} />
          ))}
        </g>
      </g>
      <g transform="translate(-12 -12)" fill="none" stroke="#4f8f6b" strokeWidth="3">
        <path d="M170,540v-28M176,542v-25M182,540v-30M940,350v-28M947,352v-34M952,350v-24M873,365v-26M880,367v-30M1140,205v-28M1147,206v-34M1000,212v-15M945,275v-20M850,500v-28" />
      </g>
      <g transform="translate(-12 -12)" fill="none" stroke="#98a47c" strokeWidth="2.5">
        {[[1042, 315], [1025, 390], [898, 430], [950, 380], [962, 457], [1095, 440], [1015, 500], [958, 522], [858, 498]].map(([x, y], i) => (
          <path key={i} d={`M${x - 8},${y - 4}l7,6v-12v12l8,-6M${x - 10},${y + 3}h20`} />
        ))}
      </g>

      <Lines pick="tracks" color="#b9964b" width={3} dash="12 5 4 5" cap="butt" />
      <Lines pick="streets" color="#d2cfcf" width={8} />
      <Lines pick="streets" color="#ffffff" width={5.5} />
      <Lines pick="avenues" color="#c4c4c4" width={12} />
      <Lines pick="avenues" color="#ffffff" width={9} />
      <Lines pick="siding" color="#a6a6a6" width={5} />
      <Lines pick="yellow" color="#b9bd7a" width={16} />
      <Lines pick="orange" color="#c9995b" width={16} />
      <Lines pick="yellow" color="#f7fabf" width={12.5} />
      <Lines pick="orange" color="#fcd6a4" width={12.5} />
      <Lines pick="rail" color="#707070" width={8} />
      <Lines pick="rail" color="#ffffff" width={3} dash="15 15" cap="butt" />
      <Lines pick="border" color="#c07cc4" width={6} dash="1 14" />
      <g transform={mid12} fill="none">
        <path d="M765,975 Q790,1060 970,1205" stroke="#7e5b50" strokeWidth="20" />
        <path d="M765,970 Q790,1060 970,1210" stroke="#f4a999" strokeWidth="16" />
        <path d="M960,605 1040,597" stroke="#444" strokeWidth="16" /><path d="M958,605 1042,597" stroke="#f7fabf" strokeWidth="12" />
        <path d="M1005,372 1095,445M998,382 1088,455" stroke="#333" strokeWidth="4" />
        <path d="M1160,350 Q1090,355 1040,400 Q990,470 995,570 Q1010,680 1040,780 Q1060,880 1020,960 T740,1212" stroke="#a983c7" strokeWidth="6" strokeDasharray="1 14" strokeLinecap="round" />
        <path d="M1160,286 Q1080,310 1045,345 M970,730 965,850 Q940,960 860,1020 L640,1098 M820,830 830,970" stroke="#5555f0" strokeWidth="3.5" strokeDasharray="4 8" />
        <rect x="498" y="309" width="18" height="18" fill="#7981b0" />
        {[[335, 325], [590, 292], [672, 270], [740, 255], [1145, 475]].map(([x, y], i) => (
          <circle key={i} cx={x} cy={y} r="6" fill="#ddd" stroke="#666" strokeWidth="2.5" />
        ))}
        <g fill="#ffffc8">
          {[[95, 560], [145, 385], [735, 550], [750, 575], [930, 680], [890, 800], [930, 820], [900, 770], [630, 1000], [600, 1030], [780, 890], [590, 860], [480, 520], [395, 685], [360, 650], [770, 640], [660, 330], [640, 420]].map(([x, y], i) => (
            <rect key={i} x={x} y={y} width="20" height="15" stroke="#e5e59c" strokeWidth="1.5" transform={`rotate(-15 ${x} ${y})`} />
          ))}
        </g>
      </g>
      <g transform={east12}>
        <path d="M830,5 960,55 1150,112" fill="none" stroke="#d44a70" strokeWidth="23" />
        <path d="M830,5 960,55 1150,112" fill="none" stroke="#e892a2" strokeWidth="18" />
        <rect x="384" y="941" width="18" height="18" fill="#7981b0" />
        <circle cx="396" cy="312" r="5" fill={C.water} />
      </g>

      {shields.map((b, i) => (
        <g key={i} transform={`translate(${sheets[b.s].x} -12)`} fontFamily="Noto Sans, sans-serif" fontSize="29" textAnchor="middle">
          <rect x={b.x} y={b.y} width={b.w} height={b.h} rx="5" fill={b.c} stroke={b.c === "#f4dfcb" ? "#c9a184" : "#b5b894"} strokeWidth="3" />
          {b.t.map((line, j) => line && (
            <text key={j} x={b.x + b.w / 2} y={b.y + 35 + j * 36} fill={b.c === "#f4dfcb" ? "#6b3f1f" : "#4f5a1c"}>{line}</text>
          ))}
        </g>
      ))}
      {roadLabels.map((l, i) => (
        <g key={i} transform={`translate(${sheets[l.s].x} -12)`}>
          <path id={`road${i}`} d={l.d} fill="none" />
          <text fontFamily="Noto Sans, sans-serif" fontSize={l.size} fill={l.fill ?? "#111"} stroke={l.fill ? "#e9f5e4" : "#111"} strokeWidth={l.fill ? 4 : 0.6} paintOrder="stroke">
            <textPath href={`#road${i}`} textLength={l.len} lengthAdjust="spacingAndGlyphs">{l.t}</textPath>
          </text>
        </g>
      ))}
      {places.map((l, i) => (
        <text
          key={i} x={l.x} y={l.y} textLength={l.len} lengthAdjust="spacingAndGlyphs"
          transform={`translate(${sheets[l.s].x} -12) rotate(${l.turn ?? 0} ${l.x} ${l.y})`}
          fontFamily="Noto Sans, sans-serif" fontStyle={l.it ? "italic" : "normal"} fontSize={l.size}
          fill={l.fill ?? "#222"} stroke="rgba(255,255,255,.65)" strokeWidth="5" paintOrder="stroke"
        >
          {l.t}
        </text>
      ))}
      <g transform={mid12}>
        <path d="M552,1042 Q545,1015 527,1000 A33,33 0 1 1 577,1000 Q559,1015 552,1042Z" fill="#3b82c4" />
        <circle cx="552" cy="978" r="28" fill="#fbd05a" />
        <path d="M524,978a28,28 0 0 1 56,0z" fill="#b9d3ee" />
        <rect x="535" y="957" width="34" height="22" rx="3" fill="#94b4d8" stroke="#d2553f" strokeWidth="3" />
        <path d="M532,979h40v19h-40z" fill="#c8321f" />
        <path d="M535,998h9v6h-9zM560,998h9v6h-9zM545,984h14v8h-14z" fill="#3c2320" />
        <circle cx="538" cy="988" r="3" fill="#ffd95b" /><circle cx="566" cy="988" r="3" fill="#ffd95b" />
      </g>
    </svg>
  );
}

const stations = [
  ["The Pub Stanica", "Bulevar Oslobodjenja - Brace Ribnikar"],
  ["Merkator", "Bulevar Oslobodjenja - Merkator"],
  ["Nis", "Narodnog fronta - Bulevar Oslobodjenja"],
  ["Schneider Electric DMS 1", "Narodnog fronta - Sekspirova"],
  ["Okretnica", "Narodnog fronta - Okretnica"],
  ["Kruzni tok", "Bulevar Patrijarha Pavla - Bulevar Evrope"],
  ["12 stanica", "Ulaz u Bulevar Patrijarha Pavla"],
];
const menu = ["Dashboard", "Add Ticket Inspector", "Add BusLine", "Stations", "All PriceLists", "Add PriceList"];

export default function App() {
  return (
    <>
      <Global />
      <Page>
        <Navbar>
          <Brand><Logo /><span>City Transit</span></Brand>
          <NavGroup>
            <NavLink $icon={18}><FaHome />Home</NavLink>
            <NavLink><FaClock />Timetables</NavLink>
            <NavLink $icon={18}><FaMapMarkedAlt />Routes</NavLink>
            <NavLink $icon={18}><FaTicketAlt />Tickets</NavLink>
            <NavLink><FaLocationArrow />Locations</NavLink>
          </NavGroup>
          <NavGroup $end>
            <NavLink $active $icon={20}><FaUserShield />Admin Panel</NavLink>
            <NavLink><FaUserCircle />Profile</NavLink>
            <NavLink $track={0.3}><FaSignOutAlt />Log Out</NavLink>
          </NavGroup>
        </Navbar>
        <Body>
          <Sidebar>
            {menu.map((m) => <SideLink key={m} $active={m === "Stations"}>{m}</SideLink>)}
          </Sidebar>
          <Main>
            <TitleBar>
              <Title>Stations</Title>
              <AddButton>Add station</AddButton>
            </TitleBar>
            <Table>
              <Head><div>Name</div><div>Address</div></Head>
              {stations.map(([name, address]) => (
                <Row key={name}>
                  <Name>{name}</Name>
                  <Address>{address}</Address>
                  <Actions>
                    <IconButton><FaPen /></IconButton>
                    <IconButton $danger><FaTrashAlt /></IconButton>
                  </Actions>
                </Row>
              ))}
            </Table>
            <MapBox>
              <CityMap />
              <Zoom><ZoomButton>+</ZoomButton><ZoomButton $last>−</ZoomButton></Zoom>
              <Attribution>© <a>OpenStreetMap</a> contributors.</Attribution>
            </MapBox>
          </Main>
        </Body>
      </Page>
    </>
  );
}
